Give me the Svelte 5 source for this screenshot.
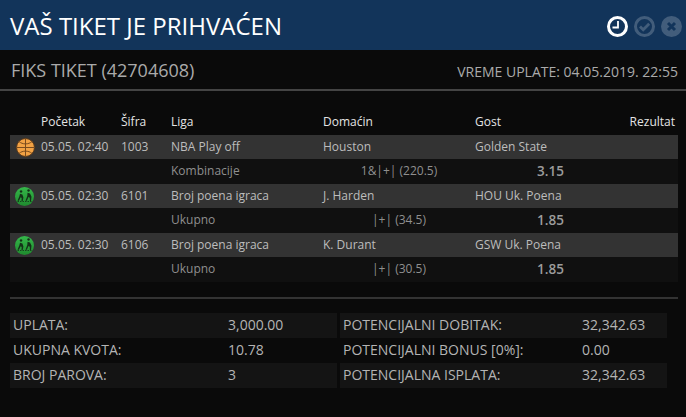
<script>
  const rows = [
    { icon: 'ball', time: '05.05. 02:40', code: '1003', league: 'NBA Play off', home: 'Houston', away: 'Golden State', market: 'Kombinacije', pick: '1&|+| (220.5)', odd: '3.15' },
    { icon: 'run', time: '05.05. 02:30', code: '6101', league: 'Broj poena igraca', home: 'J. Harden', away: 'HOU Uk. Poena', market: 'Ukupno', pick: '|+| (34.5)', odd: '1.85' },
    { icon: 'run', time: '05.05. 02:30', code: '6106', league: 'Broj poena igraca', home: 'K. Durant', away: 'GSW Uk. Poena', market: 'Ukupno', pick: '|+| (30.5)', odd: '1.85' }
  ];
  const left = [['UPLATA:', '3,000.00'], ['UKUPNA KVOTA:', '10.78'], ['BROJ PAROVA:', '3']];
  const right = [['POTENCIJALNI DOBITAK:', '32,342.63'], ['POTENCIJALNI BONUS [0%]:', '0.00'], ['POTENCIJALNA ISPLATA:', '32,342.63']];
</script>

<div class="page">
  <header class="top">
    <h1>VAŠ TIKET JE PRIHVAĆEN</h1>
    <div class="status">
      <svg width="21" height="21" viewBox="0 0 21 21">
        <circle cx="10.5" cy="10.5" r="9" fill="none" stroke="#fff" stroke-width="3" />
        <path d="M11 5v6.5H5.500" fill="none" stroke="#fff" stroke-width="1.8" />
      </svg>
      <svg class="off" width="21" height="21" viewBox="0 0 21 21">
        <circle cx="10.5" cy="10.5" r="9" fill="none" stroke="#fff" stroke-width="3" />
        <path d="M6 10.500l3.200 3.200 6-6" fill="none" stroke="#fff" stroke-width="2.8" />
      </svg>
      <svg class="off" width="21" height="21" viewBox="0 0 21 21">
        <circle cx="10.5" cy="10.5" r="10.5" fill="#fff" />
        <path d="M7 7l7 7M14 7l-7 7" fill="none" stroke="#12345a" stroke-width="3" />
      </svg>
    </div>
  </header>

  <div class="sub">
    <h2>FIKS TIKET (42704608)</h2>
    <span>VREME UPLATE: 04.05.2019. 22:55</span>
  </div>

  <div class="table">
    <div class="row head">
      <span></span><span>Početak</span><span>Šifra</span><span>Liga</span><span>Domaćin</span><span>Gost</span><span class="res">Rezultat</span>
    </div>
    {#each rows as r}
      <div class="row main">
        <span class="ic">
          {#if r.icon === 'ball'}
            <svg class="ball" width="19" height="19" viewBox="0 0 19 19">
              <circle cx="9.5" cy="9.5" r="9" fill="#f2a244" stroke="#5a3a1c" />
              <path d="M9.500 .5v18M.5 9.500h18M3 3.500c3.500 3.200 9.500 3.200 13 0M3 15.500c3.500-3.200 9.500-3.200 13 0" fill="none" stroke="#7a4c1e" stroke-width="1" />
            </svg>
          {:else}
            <svg class="run" width="19" height="19" viewBox="0 0 19 19">
              <defs>
                <linearGradient id="g" x1="0" y1="0" x2="0" y2="1">
                  <stop offset="0" stop-color="#35b84a" />
                  <stop offset="1" stop-color="#1f8a2e" />
                </linearGradient>
              </defs>
              <circle cx="9.5" cy="9.5" r="9.500" fill="url(#g)" />
              <path d="M6 5.800a1.300 1.300 0 1 1 .1 0M5 6.800l2.400.6 1 3.200-.7 3.400H6.500l.2-3-1-.8-1.800 3.600H2.500l1.800-4.400zM13.500 4.800a1.300 1.300 0 1 1 .1 0M12.500 5.800l2.500.7 1.500 3.200-.5 4.300h-1.100l-.1-3.300-1.300-.7-1.700 3.700h-1.300l1.800-4.600z" fill="#143018" />
              <path d="M2.500 14.500h14" stroke="#143018" stroke-width=".8" stroke-dasharray="1.500 1" />
            </svg>
          {/if}
        </span>
        <span>{r.time}</span><span>{r.code}</span><span>{r.league}</span>
        <span>{r.home}</span><span>{r.away}</span><span></span>
      </div>
      <div class="row extra">
        <span></span><span></span><span></span><span>{r.market}</span>
        <span class="pick">{r.pick}</span><span class="odd">{r.odd}</span><span></span>
      </div>
    {/each}
  </div>

  <div class="rule"></div>

  <div class="sum">
    <div class="col">
      {#each left as [k, v]}
        <div class="line l"><span>{k}</span><span>{v}</span></div>
      {/each}
    </div>
    <div class="col">
      {#each right as [k, v]}
        <div class="line r"><span>{k}</span><span>{v}</span></div>
      {/each}
    </div>
  </div>
</div>

<style>
  :global(body) {
    margin: 0;
    background: #0a0a0a;
  }
  .page {
    width: 686px;
    height: 417px;
    overflow: hidden;
    background: #0a0a0a;
    font-family: "Open Sans", sans-serif;
    color: #b4b4b4;
  }
  .top {
    height: 50px;
    background: #12345a;
    display: flex;
    align-items: center;
    justify-content: space-between;
    padding: 0 4px 0 10px;
  }
  h1 {
    margin: 0;
    font-size: 24px;
    font-weight: 400;
    color: #fff;
  }
  .status {
    display: flex;
    gap: 6px;
    margin-top: 2px;
  }
  .status svg {
    display: block;
  }
  .off {
    opacity: 0.2;
  }
  .sub {
    height: 39px;
    border-bottom: 2px solid #444;
    display: flex;
    align-items: center;
    justify-content: space-between;
    padding: 0 8px 0 11px;
  }
  h2 {
    margin: 0;
    font-size: 18px;
    font-weight: 400;
    color: #aaa;
  }
  .sub span {
    font-size: 14px;
    color: #aaa;
    margin-top: 3px;
  }
  .table {
    margin: 0 8px 0 10px;
    padding-top: 18px;
  }
  .row {
    display: grid;
    grid-template-columns: 31px 80px 50px 152px 152px 76px 1fr;
    align-items: center;
    font-size: 12px;
    white-space: nowrap;
    box-sizing: border-box;
  }
  .head {
    height: 26px;
    color: #e4e4e4;
    padding-bottom: 2px;
  }
  .res {
    text-align: right;
    padding-right: 3px;
  }
  .main {
    background: #333;
    color: #bdbdbd;
    height: 24px;
    padding-bottom: 2px;
  }
  .extra {
    background: #101010;
    color: #8f8f8f;
    height: 25px;
    padding-top: 1px;
  }
  .ic {
    display: flex;
    height: 19px;
    margin-top: 2px;
  }
  .ball {
    margin-left: 6px;
  }
  .run {
    margin-left: 5px;
  }
  .pick {
    text-align: center;
  }
  .odd {
    grid-column: 6 / span 2;
    padding-left: 62px;
    font-size: 13.5px;
    font-weight: 600;
    color: #9c9c9c;
  }
  .rule {
    height: 2px;
    margin: 15px 8px 0 10px;
    background: #333;
  }
  .sum {
    display: flex;
    gap: 3px;
    margin: 14px 0 0 10px;
  }
  .col {
    width: 327px;
  }
  .line {
    display: flex;
    height: 25px;
    align-items: center;
    font-size: 14px;
    color: #b4b4b4;
    padding: 0 0 2px 3px;
    box-sizing: border-box;
  }
  .line:nth-child(odd) {
    background: #141414;
  }
  .line.l span:first-child {
    width: 215px;
  }
  .line.r span:first-child {
    width: 239px;
  }
</style>
